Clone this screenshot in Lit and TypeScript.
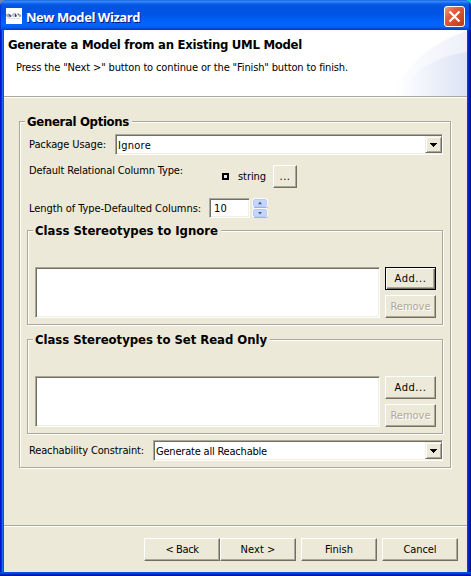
import { LitElement, html, css, svg } from "lit";
import { customElement, property } from "lit/decorators.js";

/** A single-line caption whose tracking is adjusted to fill a given width. */
@customElement("fit-text")
class FitText extends LitElement {
  @property({ type: Number }) width = 0;
  @property() text = "";
  static styles = css`
    :host { display: inline-block; white-space: pre; flex: none; }
    .t { display: inline-block; }
  `;
  firstUpdated() {
    const el = this.renderRoot.querySelector(".t") as HTMLElement;
    const natural = el.getBoundingClientRect().width;
    if (this.width && natural) {
      el.style.letterSpacing = `${(this.width - natural) / this.text.length}px`;
    }
  }
  render() {
    return html`<span class="t">${this.text}</span>`;
  }
}

const t = (text: string, width: number) => html`<fit-text .text=${text} .width=${width}></fit-text>`;

@customElement("app-root")
class AppRoot extends LitElement {
  static styles = css`
    :host {
      display: block;
      width: 471px;
      height: 576px;
      overflow: hidden;
      font: 11px/13px "DejaVu Sans Condensed", "DejaVu Sans", sans-serif;
      font-stretch: condensed;
      color: #000;
      background: linear-gradient(90deg, #6a86a8 0 50%, #10c8c8 50%);
    }
    * { box-sizing: border-box; }
    .window {
      height: 576px;
      display: flex;
      flex-direction: column;
      border-radius: 7px 7px 0 0;
      overflow: hidden;
      background: linear-gradient(90deg, #0018c8 0 1px, #0831d9 1px 2px, #166aee 2px 3px, #0855dd 3px 4px, #0855dd 4px 467px, #0441d8 467px 468px, #0029c4 468px 469px, #001da0 469px 470px, #00138c 470px);
    }
    .titlebar {
      height: 30px;
      flex: none;
      display: flex;
      align-items: flex-start;
      padding: 6px 6px 0 6px;
      background: linear-gradient(180deg, #0a4ecb 0, #3c90ff 1px, #2a80f8 2px, #0a5ce8 4px, #0353e1 7px, #0054e3 14px, #0060f8 20px, #0066ff 25px, #0060f5 27px, #0048cf 29px, #003dbd 30px);
      box-shadow: inset 1px 0 #0831d9, inset -2px 0 #0029b4;
    }
    .appicon { display: block; margin-top: 2px; }
    .title {
      font: bold 13px/16px "Open Sans", "Noto Sans", sans-serif;
      font-stretch: normal;
      color: #fff;
      text-shadow: 1px 1px #0a1883;
      margin: 3px auto 0 4px;
    }
    .close { display: block; }
    .client {
      flex: 1;
      margin: 0 4px 0 4px;
      background: #ece9d8;
      display: flex;
      flex-direction: column;
      min-height: 0;
    }
    .bottom { height: 4px; flex: none; background: linear-gradient(180deg, #0b50e0 0 1px, #0441d8 1px 2px, #0029c4 2px 3px, #00138c 3px); }
    .banner {
      height: 66px;
      flex: none;
      display: flex;
      justify-content: space-between;
      background: #fff;
    }
    .banner-text { padding: 7px 0 0 4px; white-space: nowrap; width: 350px; }
    .heading { font-weight: bold; font-size: 13px; line-height: 16px; }
    .sub { padding: 8px 0 0 8px; }
    .rule { height: 2px; flex: none; background: #fff; border-top: 1px solid #aca899; }
    .body { height: 427px; flex: none; padding: 23px 16px 0 15px; }
    .group { border: 1px solid #aca899; box-shadow: 1px 1px #fff, inset 1px 1px #fff; }
    .general { height: 347px; padding: 0 7px; }
    .legend {
      display: block;
      width: fit-content;
      height: 16px;
      font-weight: bold;
      font-size: 13px;
      line-height: 16px;
      background: #ece9d8;
      padding: 0 3px 0 2px;
      margin: -8px 0 0 -2px;
    }
    .row { display: flex; align-items: flex-start; padding-left: 2px; }
    .r1 { height: 26px; margin-top: 4px; }
    .r1 .lab { margin: 4px 9px 0 0; }
    .combo {
      flex: 1;
      height: 21px;
      display: flex;
      justify-content: space-between;
      background: #fff;
      border: 1px solid;
      border-color: #aca899 #fff #fff #aca899;
      box-shadow: inset 1px 1px #716f64, inset -1px -1px #f1efe2;
      padding: 1px 0 0 2px;
      line-height: 13px;
    }
    .combo .val { margin-top: 3px; }
    .drop {
      width: 17px;
      height: 17px;
      background: #ece9d8;
      border: 1px solid;
      border-color: #f1efe2 #716f64 #716f64 #f1efe2;
      box-shadow: inset 1px 1px #fff, inset -1px -1px #aca899;
      display: flex;
    }
    .drop svg { display: block; margin: 6px 0 0 4px; }
    .r2 { height: 33px; margin-top: 5px; }
    .r2 .lab { width: 193px; margin-top: -1px; }
    .dot { width: 7px; height: 7px; border: 2px solid #000; background: #e6e8f4; margin: 8px 9px 0 0; }
    .r2 .type { width: 35px; margin-top: 5px; }
    .btn {
      height: 23px;
      flex: none;
      display: flex;
      justify-content: center;
      padding-top: 4px;
      background: #ece9d8;
      border: 1px solid;
      border-color: #fff #716f64 #716f64 #fff;
      box-shadow: inset -1px -1px #aca899;
    }
    .btn.default { border-color: #000; box-shadow: inset 1px 1px #fff, inset -1px -1px #716f64, inset -2px -2px #aca899; }
    .btn.disabled { color: #aca899; text-shadow: 1px 1px #fff; }
    .dots { width: 24px; }
    .r3 { height: 24px; }
    .r3 .lab { width: 180px; margin-top: 4px; }
    .num {
      width: 41px;
      height: 20px;
      background: #fff;
      border: 1px solid;
      border-color: #aca899 #fff #fff #aca899;
      box-shadow: inset 1px 1px #716f64, inset -1px -1px #f1efe2;
      padding: 3px 0 0 4px;
      margin-right: 2px;
    }
    .spin { display: block; }
    .sub-group { height: 95px; padding: 0 6px 0 7px; }
    .first { margin-top: 8px; }
    .second { margin-top: 14px; }
    .list-area { display: flex; justify-content: space-between; margin-top: 28px; }
    .list {
      width: 345px;
      height: 51px;
      background: #fff;
      border: 1px solid;
      border-color: #aca899 #fff #fff #aca899;
      box-shadow: inset 1px 1px #716f64, inset -1px -1px #f1efe2;
    }
    .actions { width: 51px; display: flex; flex-direction: column; gap: 5px; }
    .r4 { margin-top: 6px; }
    .r4 .lab { margin: 4px 9px 0 0; }
    .footer { display: flex; padding: 11px 0 0 140px; }
    .footer .btn { width: 76px; }
    .gap { margin-left: 5px; }
  `;

  private drop() {
    return html`<span class="drop"><svg width="7" height="4" shape-rendering="crispEdges"><path d="M0 0h7v1h-1v1h-1v1h-1v1h-1v-1h-1v-1h-1v-1h-1z"/></svg></span>`;
  }

  private spinButton(y: number, up: boolean) {
    return svg`
      <rect x="0.5" y=${y + 0.5} width="15" height="9" rx="2" fill="#fff" stroke="#f8faff"/>
      <rect x="1.5" y=${y + 1.5} width="13" height="7" rx="1.5" fill="#c5d5fb" stroke="#b8caf5"/>
      <path d="M2 ${y + 9.5}h12.5q1 0 1-1" fill="none" stroke="#9db3e2"/>
      <path d=${up ? `M6 ${y + 6.2}h4l-2-2.6z` : `M6 ${y + 4}h4l-2 2.6z`} fill="#4d6185"/>`;
  }

  private group(cls: string, label: string, w: number, isDefault: boolean) {
    return html`<div class="group sub-group ${cls}">
      <div class="legend">${t(label, w)}</div>
      <div class="list-area">
        <div class="list"></div>
        <div class="actions">
          <div class="btn ${isDefault ? "default" : ""}">${t("Add...", 32)}</div>
          <div class="btn disabled">${t("Remove", 40)}</div>
        </div>
      </div>
    </div>`;
  }

  render() {
    return html`<div class="window">
      <div class="titlebar">
        <svg class="appicon" width="16" height="16">
          <rect width="16" height="16" fill="#fff"/>
          <path d="M0 6.5q2-1.5 4 0v3q-3 0-4-1.5z" fill="#a9afbf"/>
          <path d="M2.5 5.5l3 2-.5 2-2-1.5z" fill="#4a5886"/>
          <path d="M6 6q2-2 4-1l-1.5 4q-2 .5-2.500-1z" fill="#c2c5d0"/>
          <path d="M9 5.500q2 1 1.800 3l-1.800.5z" fill="#25356a"/>
          <path d="M12.500 6q2.500-.5 3 1.500-.5 2-2.500 1.500z" fill="#a2a9bc"/>
          <path d="M11.500 5l1.500 1v1.500l-1.500-1z" fill="#5a6999"/>
          <path d="M1 10.500h13" stroke="#dfe2ea"/>
        </svg>
        <div class="title">${t("New Model Wizard", 114)}</div>
        <svg class="close" width="21" height="21">
          <defs><linearGradient id="c" x1="0" y1="0" x2="1" y2="1"><stop offset="0" stop-color="#f0a080"/><stop offset=".35" stop-color="#e0603c"/><stop offset="1" stop-color="#bf3512"/></linearGradient></defs>
          <rect x=".5" y=".5" width="20" height="20" rx="2.5" fill="url(#c)" stroke="#fff"/>
          <path d="M5.500 5.500l10 10M15.500 5.500l-10 10" stroke="#fff" stroke-width="2.2"/>
        </svg>
      </div>
      <div class="client">
        <div class="banner">
          <div class="banner-text">
            <div class="heading">${t("Generate a Model from an Existing UML Model", 294)}</div>
            <div class="sub">${t('Press the "Next >" button to continue or the "Finish" button to finish.', 332)}</div>
          </div>
          <svg width="75" height="66">
            <defs>
              <linearGradient id="a" x1="0" x2="1"><stop offset="0" stop-color="#fff"/><stop offset="1" stop-color="#eef0f9"/></linearGradient>
              <linearGradient id="b" x1="0" x2="1"><stop offset="0" stop-color="#fff"/><stop offset="1" stop-color="#dce3f5"/></linearGradient>
            </defs>
            <path d="M0 66Q22 18 75 1V66z" fill="url(#a)"/>
            <path d="M4 66Q28 28 75 22V66z" fill="url(#b)"/>
          </svg>
        </div>
        <div class="rule"></div>
        <div class="body">
          <div class="group general">
            <div class="legend">${t("General Options", 102)}</div>
            <div class="row r1">
              <div class="lab">${t("Package Usage:", 77)}</div>
              <div class="combo"><span class="val">${t("Ignore", 33)}</span>${this.drop()}</div>
            </div>
            <div class="row r2">
              <div class="lab">${t("Default Relational Column Type:", 154)}</div>
              <div class="dot"></div>
              <div class="type">${t("string", 28)}</div>
              <div class="btn dots">${t("...", 11)}</div>
            </div>
            <div class="row r3">
              <div class="lab">${t("Length of Type-Defaulted Columns:", 172)}</div>
              <div class="num">${t("10", 13)}</div>
              <svg class="spin" width="16" height="20">${this.spinButton(0, true)}${this.spinButton(10, false)}</svg>
            </div>
            ${this.group("first", "Class Stereotypes to Ignore", 183, true)}
            ${this.group("second", "Class Stereotypes to Set Read Only", 232, false)}
            <div class="row r4">
              <div class="lab">${t("Reachability Constraint:", 115)}</div>
              <div class="combo"><span class="val">${t("Generate all Reachable", 111)}</span>${this.drop()}</div>
            </div>
          </div>
        </div>
        <div class="rule"></div>
        <div class="footer">
          <div class="btn">${t("< Back", 33)}</div>
          <div class="btn">${t("Next >", 35)}</div>
          <div class="btn gap">${t("Finish", 28)}</div>
          <div class="btn gap">${t("Cancel", 33)}</div>
        </div>
      </div>
      <div class="bottom"></div>
    </div>`;
  }
}
